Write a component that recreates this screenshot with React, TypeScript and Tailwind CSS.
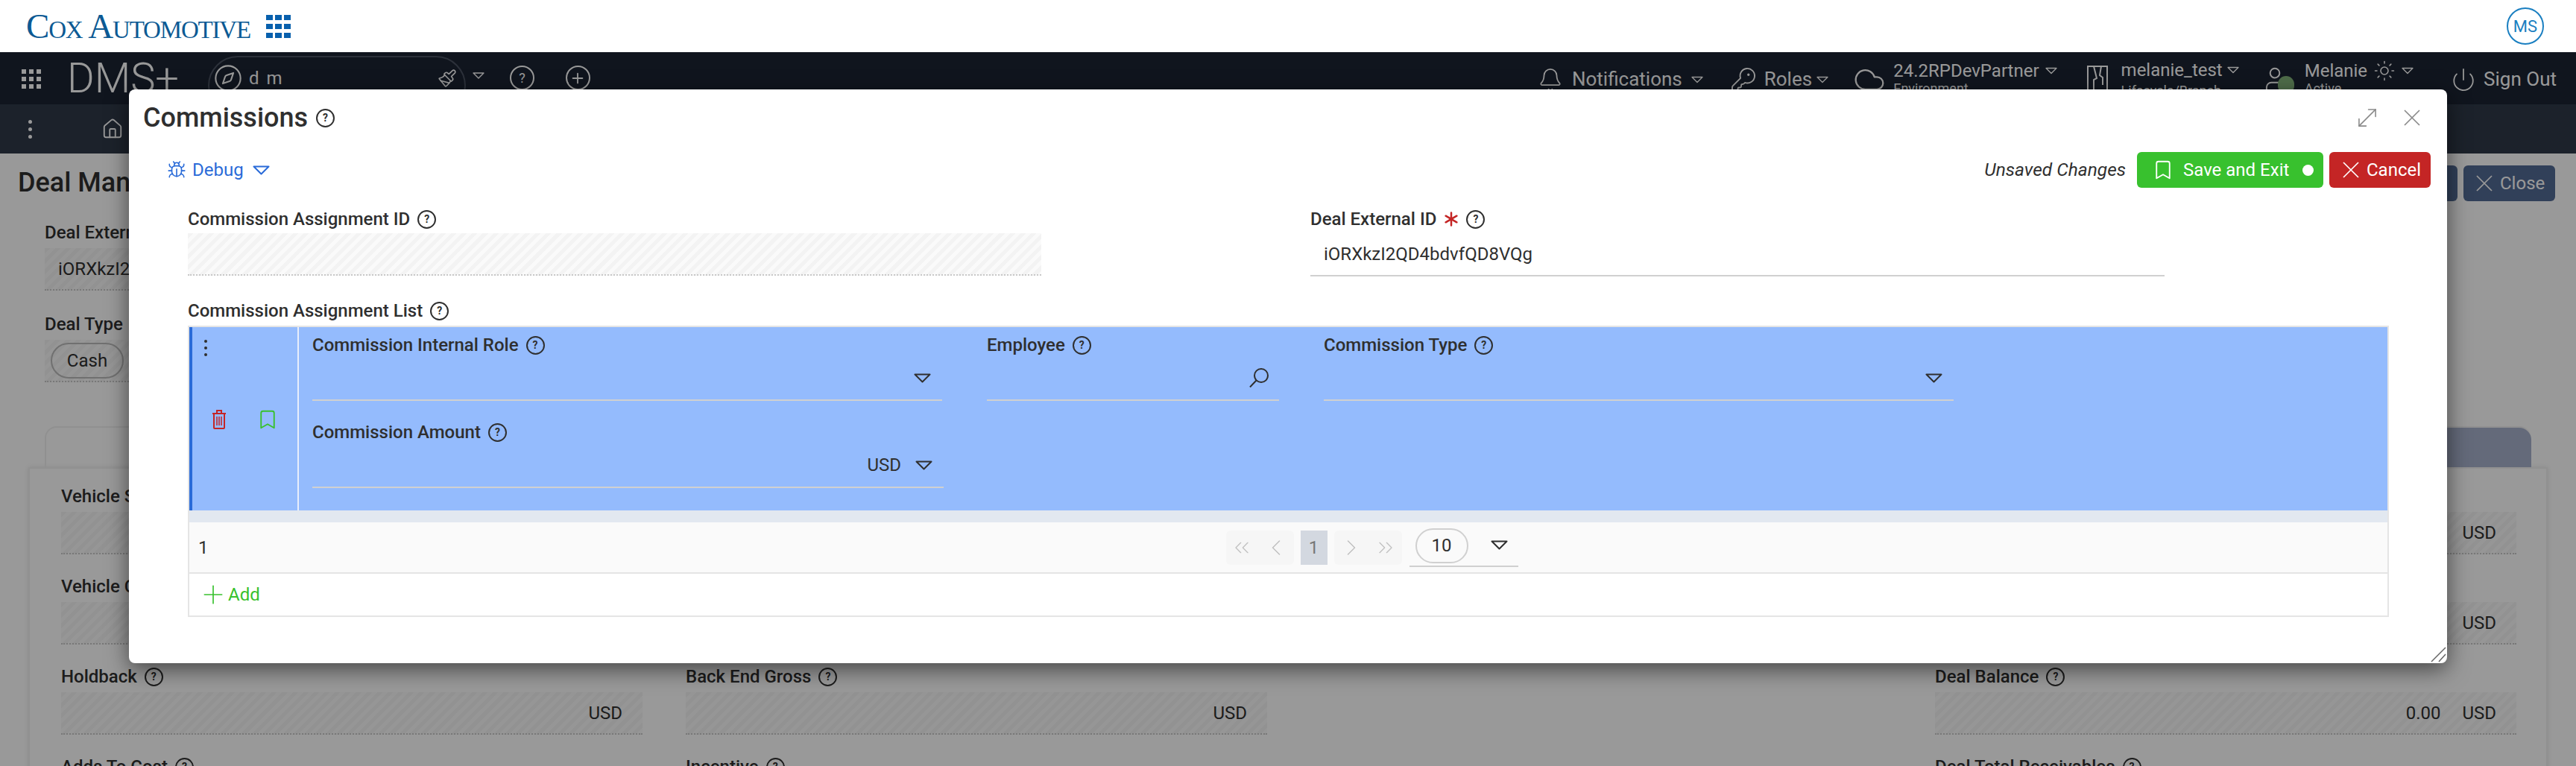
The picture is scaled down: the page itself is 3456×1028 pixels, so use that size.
import React from 'react'
import {
  Bell,
  Bookmark,
  Bug,
  ChevronLeft,
  ChevronRight,
  ChevronsLeft,
  ChevronsRight,
  Cloud,
  Compass,
  Home,
  KeyRound,
  MoveDiagonal,
  Paintbrush,
  Plus,
  Power,
  Sun,
  User,
} from 'lucide-react'

const hatch =
  'bg-[repeating-linear-gradient(135deg,#f3f3f3_0,#f3f3f3_5px,#fafafa_5px,#fafafa_10px)]'

const Help = () => (
  <span className="inline-flex items-center justify-center w-[25px] h-[25px] shrink-0 rounded-full border-2 border-[#2f2f2f] text-[14px] font-bold leading-none text-[#2f2f2f]">
    ?
  </span>
)

const Caret = ({ className = 'text-[#2f2f2f]' }: { className?: string }) => (
  <svg width="23" height="13" viewBox="0 0 23 13" fill="none" className={className}>
    <path d="M1.5 1.5h20L11.5 11.5z" stroke="currentColor" strokeWidth="2" strokeLinejoin="round" />
  </svg>
)

const XIcon = ({ className = '' }: { className?: string }) => (
  <svg width="22" height="22" viewBox="0 0 22 22" fill="none" stroke="currentColor" strokeWidth="1.75" className={className}>
    <path d="M1 1l20 20M21 1L1 21" />
  </svg>
)

const SearchIcon = () => (
  <svg width="26" height="26" viewBox="0 0 26 26" fill="none" stroke="#2f2f2f" strokeWidth="2" className="-mr-[1px]">
    <circle cx="16" cy="10" r="9" />
    <path d="M9.5 16.5L1 25.5" />
  </svg>
)

const RequiredMark = () => (
  <svg width="20" height="20" viewBox="0 0 20 20" fill="none" stroke="#c42525" strokeWidth="2.5" strokeLinecap="round">
    <path d="M10 1.5v17M2.6 5.7l14.8 8.6M17.4 5.7L2.6 14.3" />
  </svg>
)

const Label = ({ text, required }: { text: string; required?: boolean }) => (
  <div className="flex items-center gap-[10px] h-[26px] text-[24px] leading-[26px] font-medium text-[#2f2f2f] whitespace-nowrap">
    <span>{text}</span>
    {required && <RequiredMark />}
    <Help />
  </div>
)

const ReadOnly = ({
  label,
  value,
  suffix,
  children,
}: {
  label: string
  value?: string
  suffix?: string
  children?: React.ReactNode
}) => (
  <div className="flex flex-col gap-[8px]">
    <Label text={label} />
    <div className={`flex items-center h-[57px] text-[24px] text-[#2f2f2f] border-b-2 border-dotted border-[#c8c8c8] ${hatch} ${children ? '' : 'justify-end px-[27px] gap-[29px]'}`}>
      {children}
      {value && <span>{value}</span>}
      {suffix && <span>{suffix}</span>}
    </div>
  </div>
)

// the page that sits behind the dialog
const TopHeader = () => (
  <header className="flex items-center justify-between h-[70px] bg-white pl-[35px] pr-[43px]">
    <div className="flex items-center gap-[21px]">
      <span className="font-['Liberation_Serif',serif] [font-variant-caps:small-caps] text-[47px] leading-none tracking-[-1.2px] text-[#0c5a94]">
        Cox Automotive
      </span>
      <div className="grid grid-cols-[9px_9px_9px] gap-x-[3px] gap-y-[5px]">
        {Array.from({ length: 9 }).map((_, i) => (
          <span key={i} className="h-[7px] bg-[#0860ad]" />
        ))}
      </div>
    </div>
    <span className="flex items-center justify-center w-[50px] h-[50px] rounded-full border-2 border-[#1a7fc1] text-[22px] text-[#1a7fc1]">
      MS
    </span>
  </header>
)

const NavCaret = () => <Caret className="text-white w-[16px] h-[10px]" />

const MainNav = () => (
  <nav className="flex items-start h-[70px] bg-[#1b2332] text-white text-[26px] pt-[5px]">
    <div className="grid grid-cols-3 gap-[4px] w-[26px] ml-[29px] mt-[18px]">
      {Array.from({ length: 9 }).map((_, i) => (
        <span key={i} className="w-[6px] h-[6px] bg-white" />
      ))}
    </div>
    <span className="ml-[35px] text-[56px] font-light leading-[60px]">DMS+</span>
    <div className="flex items-start w-[346px] h-[80px] ml-[39px] pl-[5px] pr-[10px] rounded-[40px] border-2 border-[#4a5262]">
      <Compass size={40} strokeWidth={1.25} className="mt-[8px]" />
      <span className="ml-[8px] mt-[10px] text-[24px] tracking-[2px]">d m</span>
      <Paintbrush size={26} strokeWidth={1.5} className="ml-auto mt-[15px]" />
    </div>
    <span className="ml-[9px] mt-[21px]"><Caret className="text-white w-[16px] h-[11px]" /></span>
    <span className="inline-flex items-center justify-center w-[33px] h-[33px] ml-[34px] mt-[13px] rounded-full border-2 border-white text-[18px]">?</span>
    <span className="inline-flex items-center justify-center w-[33px] h-[33px] ml-[42px] mt-[13px] rounded-full border-2 border-white">
      <Plus size={22} strokeWidth={2} />
    </span>

    <div className="flex items-start ml-auto pr-[26px]">
      <div className="flex items-center gap-[12px] mt-[12px]">
        <Bell size={34} strokeWidth={1.25} />
        <span>Notifications</span>
        <NavCaret />
      </div>
      <div className="flex items-center gap-[10px] ml-[36px] mt-[12px]">
        <KeyRound size={36} strokeWidth={1.25} />
        <span className="-mr-[4px]">Roles</span>
        <NavCaret />
      </div>
      <div className="flex gap-[10px] ml-[33px]">
        <Cloud size={44} strokeWidth={1.25} className="mt-[10px]" />
        <div className="flex flex-col">
          <div className="flex items-center gap-[8px] leading-[40px] text-[24px]">
            <span>24.2RPDevPartner</span>
            <NavCaret />
          </div>
          <span className="-mt-[4px] text-[18px] leading-[16px]">Environment</span>
        </div>
      </div>
      <div className="flex gap-[17px] ml-[39px]">
        <svg width="30" height="42" viewBox="0 0 30 42" fill="none" stroke="currentColor" strokeWidth="2" className="mt-[12px]">
          <path d="M2 2h26v40H2zM10 2l4 16-4 2v22M20 2l-2 12 4 3v10" />
        </svg>
        <div className="flex flex-col">
          <div className="flex items-center gap-[6px] leading-[38px] text-[24px]">
            <span>melanie_test</span>
            <NavCaret />
          </div>
          <span className="mt-[1px] text-[18px] leading-[16px]">Lifecycle/Branch</span>
        </div>
      </div>
      <div className="flex gap-[19px] ml-[29px]">
        <span className="relative w-[40px] h-[50px] mt-[12px]">
          <User size={38} strokeWidth={1.25} />
          <span className="absolute left-[23px] top-[15px] w-[22px] h-[24px] rounded-full bg-[#84b67c]" />
        </span>
        <div className="flex flex-col">
          <div className="flex items-center gap-[8px] leading-[40px] text-[24px]">
            <span>Melanie</span>
            <Sun size={30} strokeWidth={1.25} />
            <NavCaret />
          </div>
          <span className="-mt-[4px] text-[18px] leading-[16px]">Active</span>
        </div>
      </div>
      <div className="flex items-center gap-[10px] ml-[50px] mt-[12px]">
        <Power size={34} strokeWidth={1.25} />
        <span>Sign Out</span>
      </div>
    </div>
  </nav>
)

const SubNav = () => (
  <div className="flex items-center h-[66px] bg-[#2f3949] text-white pl-[38px]">
    <span className="flex flex-col gap-[5px]">
      <span className="w-[5px] h-[5px] rounded-full bg-white" />
      <span className="w-[5px] h-[5px] rounded-full bg-white" />
      <span className="w-[5px] h-[5px] rounded-full bg-white" />
    </span>
    <Home size={30} strokeWidth={1.5} className="ml-[93px]" />
  </div>
)

const PageBehind = () => (
  <div className="bg-white">
    <div className="flex items-start h-[93px] pl-[24px] pr-[28px]">
      <h1 className="mt-[21px] text-[36px] font-medium leading-[36px] text-[#2f2f2f]">Deal Management</h1>
      <div className="flex gap-[8px] ml-auto mt-[16px]">
        <span className="w-[120px] h-[48px] rounded-[6px] bg-[#536b94]" />
        <span className="flex items-center gap-[10px] w-[123px] h-[48px] pl-[17px] rounded-[6px] bg-[#536b94] text-[24px] text-white">
          <XIcon />
          Close
        </span>
      </div>
    </div>
    <div className="flex flex-col gap-[32px] pl-[60px] w-[840px]">
      <ReadOnly label="Deal External ID">
        <span className="pl-[18px]">iORXkzI2QD4bdvfQD8VQg</span>
      </ReadOnly>
      <ReadOnly label="Deal Type">
        <span className="flex items-center justify-center w-[98px] h-[48px] ml-[8px] rounded-[24px] border-2 border-[#bbbbbb]">Cash</span>
      </ReadOnly>
    </div>
    <div className="flex items-end h-[114px] px-[60px]">
      <div className="flex justify-end flex-1 h-[55px] rounded-t-[16px] border-t-2 border-l-2 border-[#f0f0f0]">
        <span className="w-[700px] h-full rounded-tr-[16px] bg-[#a7b1cb]" />
      </div>
    </div>
    <section className="mx-[38px] h-[500px] border-x-2 border-t-2 border-[#f2f2f2] shadow-[0_0_6px_rgba(0,0,0,0.1)] pt-[24px] pl-[42px]">
      <div className="grid grid-cols-4 gap-x-[58px] gap-y-[30px] w-[3294px]">
        <ReadOnly label="Vehicle Sale" suffix="USD" />
        <ReadOnly label="Front End Gross" suffix="USD" />
        <div />
        <ReadOnly label="Deal Total" suffix="USD" />
        <ReadOnly label="Vehicle Cost" suffix="USD" />
        <ReadOnly label="Total Gross" suffix="USD" />
        <div />
        <ReadOnly label="Deal Payable" suffix="USD" />
        <ReadOnly label="Holdback" suffix="USD" />
        <ReadOnly label="Back End Gross" suffix="USD" />
        <div />
        <ReadOnly label="Deal Balance" value="0.00" suffix="USD" />
        <ReadOnly label="Adds To Cost" suffix="USD" />
        <ReadOnly label="Incentive" suffix="USD" />
        <div />
        <ReadOnly label="Deal Total Receivables" suffix="USD" />
      </div>
    </section>
  </div>
)

const RowField = ({
  label,
  width,
  children,
}: {
  label: string
  width: string
  children?: React.ReactNode
}) => (
  <div className={`flex flex-col h-[88px] border-b-2 border-[#d0d0d0] ${width}`}>
    <Label text={label} />
    <div className="flex flex-1 items-center justify-end gap-[19px] pr-[15px] pt-[2px] text-[24px] text-[#2f2f2f]">
      {children}
    </div>
  </div>
)

const TrashIcon = () => (
  <svg width="20" height="26" viewBox="0 0 20 26" fill="none" stroke="#c42525" strokeWidth="2">
    <path d="M1 5h18M7 4V1h6v3M3 5v19a1 1 0 0 0 1 1h12a1 1 0 0 0 1-1V5" />
    <path d="M7 9v12M10 9v12M13 9v12" strokeWidth="1.5" />
  </svg>
)

const AssignmentTable = () => (
  <div className="ml-[79px] mt-[7px] w-[2953px] border-2 border-[#e5e5e5]">
    <div className="flex h-[246px] bg-[#94bbfd]">
      <div className="w-[4px] bg-[#2a6bd8]" />
      <div className="w-[143px] border-r-2 border-[#e8eefb] pl-[16px] pt-[17px]">
        <span className="flex flex-col gap-[5px]">
          <span className="w-[4px] h-[4px] rounded-full bg-[#2f2f2f]" />
          <span className="w-[4px] h-[4px] rounded-full bg-[#2f2f2f]" />
          <span className="w-[4px] h-[4px] rounded-full bg-[#2f2f2f]" />
        </span>
        <div className="flex items-center gap-[40px] mt-[70px] pl-[10px]">
          <TrashIcon />
          <Bookmark size={30} strokeWidth={1.5} className="text-[#38c12e]" />
        </div>
      </div>
      <div className="flex flex-wrap content-start gap-x-[60px] gap-y-[29px] pl-[18px] pt-[11px] flex-1">
        <RowField label="Commission Internal Role" width="w-[845px]">
          <Caret />
        </RowField>
        <RowField label="Employee" width="w-[392px]">
          <SearchIcon />
        </RowField>
        <RowField label="Commission Type" width="w-[845px]">
          <Caret />
        </RowField>
        <RowField label="Commission Amount" width="w-[847px]">
          <span>USD</span>
          <Caret />
        </RowField>
      </div>
    </div>
    <div className="h-[16px] bg-[#e2e8f0]" />
    <div className="flex items-center h-[67px] bg-[#fafafa] pl-[12px]">
      <span className="text-[24px] text-[#2f2f2f]">1</span>
      <div className="flex items-center ml-[1365px] text-[#c0c0c0]">
        <div className="flex items-center justify-around w-[91px] h-[46px] rounded-[6px] bg-[#f6f6f6]">
          <ChevronsLeft size={32} strokeWidth={1} />
          <ChevronLeft size={36} strokeWidth={1} />
        </div>
        <span className="flex items-center justify-center w-[36px] h-[46px] ml-[9px] bg-[#d3d8e0] text-[24px] text-[#777]">1</span>
        <div className="flex items-center justify-around w-[91px] h-[46px] ml-[9px] rounded-[6px] bg-[#f6f6f6]">
          <ChevronRight size={36} strokeWidth={1} />
          <ChevronsRight size={32} strokeWidth={1} />
        </div>
      </div>
      <div className="flex items-start w-[146px] h-[52px] ml-[10px] pl-[8px] border-b-2 border-[#d0d0d0]">
        <span className="flex items-center justify-center w-[71px] h-[47px] rounded-[24px] border-2 border-[#d0d0d0] text-[24px] text-[#2f2f2f]">10</span>
        <span className="ml-[30px] mt-[16px]"><Caret /></span>
      </div>
    </div>
    <div className="flex items-center h-[58px] pl-[12px] border-t-2 border-[#e5e5e5] text-[24px] text-[#38c12e]">
      <Plus size={40} strokeWidth={1} />
      Add
    </div>
  </div>
)

const CommissionsModal = () => (
  <div className="absolute left-[173px] top-[120px] w-[3110px] h-[770px] rounded-[8px] bg-white shadow-[0_8px_30px_rgba(0,0,0,0.55)]">
    <div className="flex items-center h-[76px] pl-[19px] pr-[36px]">
      <h2 className="text-[36px] font-medium text-[#2f2f2f]">Commissions</h2>
      <span className="ml-[11px]"><Help /></span>
      <div className="flex items-center gap-[30px] ml-auto text-[#8a8a8a]">
        <MoveDiagonal size={38} strokeWidth={1} />
        <XIcon />
      </div>
    </div>
    <div className="flex items-center h-[48px] mt-[8px] pl-[51px] pr-[22px]">
      <div className="flex items-center text-[#2a6bd8] text-[24px]">
        <Bug size={26} strokeWidth={1.5} />
        <span className="ml-[8px]">Debug</span>
        <span className="ml-[12px]"><Caret className="text-[#2a6bd8]" /></span>
      </div>
      <span className="ml-auto text-[24.5px] italic text-[#2f2f2f]">Unsaved Changes</span>
      <button className="flex items-center w-[250px] h-[48px] ml-[15px] pl-[20px] pr-[13px] rounded-[6px] bg-[#38c12e] text-[24px] text-white">
        <Bookmark size={30} strokeWidth={1.5} />
        <span className="ml-[12px]">Save and Exit</span>
        <span className="ml-auto w-[15px] h-[15px] rounded-full bg-white" />
      </button>
      <button className="flex items-center gap-[10px] w-[136px] h-[48px] ml-[8px] pl-[18px] rounded-[6px] bg-[#c42525] text-[24px] text-white">
        <XIcon />
        Cancel
      </button>
    </div>
    <div className="flex mt-[29px] pl-[79px]">
      <div className="flex flex-col gap-[6px] w-[1145px]">
        <Label text="Commission Assignment ID" />
        <div className={`h-[57px] border-b-2 border-dotted border-[#c8c8c8] ${hatch}`} />
      </div>
      <div className="flex flex-col gap-[6px] w-[1146px] ml-[361px]">
        <Label text="Deal External ID" required />
        <div className="flex items-center h-[58px] pl-[18px] border-b-2 border-[#d0d0d0] text-[24px] text-[#2f2f2f]">
          iORXkzI2QD4bdvfQD8VQg
        </div>
      </div>
    </div>
    <div className="ml-[79px] mt-[33px]">
      <Label text="Commission Assignment List" />
    </div>
    <AssignmentTable />
    <svg width="22" height="22" viewBox="0 0 22 22" className="absolute right-[1px] bottom-[1px]" stroke="#666" strokeWidth="1.5">
      <path d="M2 21L21 2M12 21L21 11" />
    </svg>
  </div>
)

const App = () => {
  return (
    <div className="relative h-[1028px] overflow-hidden bg-white font-['Roboto',sans-serif]">
      <TopHeader />
      <MainNav />
      <SubNav />
      <PageBehind />
      <div className="absolute inset-x-0 top-[70px] bottom-0 bg-black/40" />
      <CommissionsModal />
    </div>
  )
}

export default App
